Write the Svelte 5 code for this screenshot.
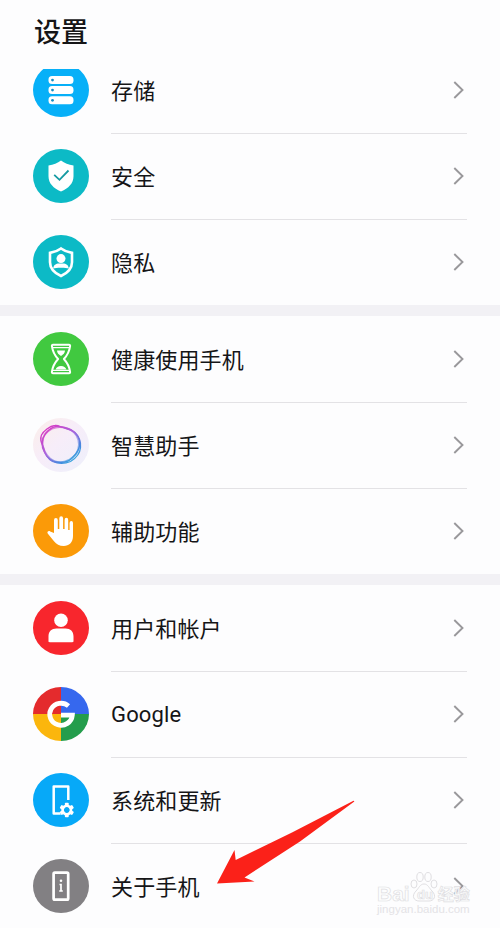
<script lang="ts">
  type Item = { icon: string; label: string; color: string };

  const groups: Item[][] = [
    [
      { icon: "storage", label: "存储", color: "#07b0f8" },
      { icon: "security", label: "安全", color: "#0cbac6" },
      { icon: "privacy", label: "隐私", color: "#0cbac6" },
    ],
    [
      { icon: "balance", label: "健康使用手机", color: "#41c940" },
      { icon: "assistant", label: "智慧助手", color: "url(#halo)" },
      { icon: "accessibility", label: "辅助功能", color: "#fb9a08" },
    ],
    [
      { icon: "account", label: "用户和帐户", color: "#f8262d" },
      { icon: "google", label: "Google", color: "#ffffff" },
      { icon: "system", label: "系统和更新", color: "#07a9f8" },
      { icon: "about", label: "关于手机", color: "#828083" },
    ],
  ];
  const teeth = [0, 60, 120, 180, 240, 300];
</script>

{#snippet glyph(name: string)}
  {#if name === "storage"}
    {#each [14.3, 24.3, 34.5] as y}
      <rect x="15.5" y={y - 1.2} width="25" height="8" rx="3.6" fill="#fff" />
      <circle cx="19.5" cy={y + 2.8} r="1.4" fill="#168fc4" />
    {/each}
  {:else if name === "security"}
    <path d="M28 11.5c3.5 2.7 7.5 4.3 12.5 5v10.8c0 7.2-5 12-12.5 15.2-7.5-3.2-12.5-8-12.5-15.2V16.5c5-.7 9-2.3 12.5-5z" fill="#fff" />
    <path d="M21.2 25.8l5.3 5 9-9.3" fill="none" stroke="#159aa2" stroke-width="1.8" />
  {:else if name === "privacy"}
    <path d="M28 13.500c3.300 2.500 6.500 3.600 11 4.400v9.300c0 6.500-4.500 10.800-11 13.800-6.500-3-11-7.300-11-13.800v-9.300c4.500-.8 7.700-1.900 11-4.400z" fill="none" stroke="#fff" stroke-width="2.6" />
    <circle cx="28" cy="23.6" r="4.500" fill="#fff" />
    <path d="M20.200 33.500c.4-3.600 2.700-5 5.800-5h4c3.100 0 5.400 1.400 5.800 5-2-.7-3.800-.8-7.800-.8s-5.800.1-7.800.8z" fill="#fff" />
  {:else if name === "balance"}
    <g fill="none" stroke="#fff" stroke-width="2" stroke-linejoin="round">
      <path d="M20 12.800h16q1.300 0 1.100 1.300c-.8 6-3 9.400-6.200 12.900 3.200 3.500 5.400 6.900 6.200 12.900q.2 1.300-1.100 1.300H20q-1.300 0-1.100-1.300c.8-6 3-9.400 6.200-12.900-3.200-3.500-5.400-6.900-6.200-12.900q-.2-1.300 1.100-1.300z" />
      <path d="M19.500 15.600h17M19.500 38.400h17" stroke-width="1.200" />
    </g>
    <path d="M24 18.500h8c-.2 2.500-1.600 4-4 5.500-2.400-1.500-3.800-3-4-5.500zM22.600 37.500c.8-2 2.600-3.400 5.400-3.400s4.600 1.400 5.400 3.400z" fill="#fff" />
  {:else if name === "assistant"}
    <g fill="none" stroke="url(#ring)">
      <path d="M16 12c4-3 6-4 9-3.500 5 .5 12 2 17 6 5 5 6 10 5.500 15-.5 6-5 11-10 14-6 2.500-13 2-18 0-5-3-8-8-10-14-1-6 1-13 6.500-17.500z" stroke-width="1.300" />
      <path d="M22 7.500c4-.5 6 2 11 3 7 1.500 12 6 13.500 12 1.500 7-3 14-8 18-4 4-11 4.500-17 3-7-2-10-9-11-14C8.500 25 6.500 22 8.500 17c2-4 8-9 13.500-9.500z" stroke-width="1.300" />
      <path d="M19 10.500c6-2.500 13-1.500 18 1 6 3.500 9 9 9 15 0 7-4 12-10 15.500-7 3.500-14 2.500-19-1.500-5-5-7-9-7.500-14.500C9 19 13 13.500 19 10.500z" stroke-width="2" opacity=".6" />
    </g>
  {:else if name === "accessibility"}
    <path d="M21 29V16.200q0-2.200 1.900-2.200t1.900 2.200V25h1.500V14.500q0-2.200 1.900-2.200t1.900 2.200V25h1.500V16q0-2.200 1.800-2.200t1.800 2.200v10h1.400V19q0-2 1.700-2t1.700 2v13c0 6.500-4 10-9.200 10-4.600 0-7.300-1.600-9.800-4.800l-6.300-7.700c-1-1.400.8-3.200 2.500-2z" fill="#fff" />
  {:else if name === "account"}
    <circle cx="28" cy="19.200" r="6.800" fill="#fff" />
    <path d="M15.500 40v-4.500c0-5.200 3-8 8-8h9c5 0 8 2.800 8 8V40c0 .8-.4 1.200-1.200 1.200H16.700c-.8 0-1.200-.4-1.200-1.200z" fill="#fff" />
  {:else if name === "google"}
    <g clip-path="url(#disc)">
      <path d="M0 0h28v27H0z" fill="#e42b2d" />
      <path d="M28 0h28v27H28z" fill="#3668ee" />
      <path d="M0 27h28v27H0z" fill="#fbb60d" />
      <path d="M28 27h28v27H28z" fill="#249d4c" />
    </g>
    <path d="M35.500 19A11.300 11 0 1 0 39.300 28.200H28" fill="none" stroke="#fff" stroke-width="4.800" />
  {:else if name === "system"}
    <path d="M35.3 27V13.600H20.700v27h7" fill="none" stroke="#fff" stroke-width="2.500" stroke-linejoin="round" />
    <g transform="translate(33.8 37)">
      <circle r="7" fill="#07a9f8" />
      {#each teeth as angle}
        <rect x="-1.9" y="-7.200" width="3.800" height="4" rx=".8" fill="#fff" transform="rotate({angle})" />
      {/each}
      <circle r="4.200" fill="none" stroke="#fff" stroke-width="2.600" />
    </g>
  {:else if name === "about"}
    <rect x="20.600" y="13.700" width="14.600" height="27" rx="1.200" fill="none" stroke="#fff" stroke-width="2.700" />
    <circle cx="28" cy="21.800" r="1.300" fill="#fff" />
    <path d="M26.500 25.500H28V32M26.200 32h3.600" fill="none" stroke="#fff" stroke-width="1.700" />
  {/if}
{/snippet}

<svg class="defs" width="0" height="0" aria-hidden="true">
  <defs>
    <clipPath id="disc"><ellipse cx="28" cy="27" rx="28" ry="27" /></clipPath>
    <linearGradient id="ring" gradientUnits="userSpaceOnUse" x1="14" y1="10" x2="42" y2="44">
      <stop offset="0" stop-color="#d63bc4" />
      <stop offset=".45" stop-color="#a765dd" />
      <stop offset=".8" stop-color="#4289df" />
      <stop offset="1" stop-color="#38b2dc" />
    </linearGradient>
    <linearGradient id="halo" x1="0" y1="0" x2="1" y2="1">
      <stop offset="0" stop-color="#fbeee9" />
      <stop offset=".45" stop-color="#f7edf9" />
      <stop offset="1" stop-color="#edf0fb" />
    </linearGradient>
  </defs>
</svg>

<main class="settings">
  <header><h1>设置</h1></header>

  <div class="list">
    {#each groups as group}
      <section class="group">
        {#each group as item}
          <div class="row">
            <svg class="icon" width="56" height="54" viewBox="0 0 56 54">
              <ellipse cx="28" cy="27" rx="28" ry="27" fill={item.color} />
              {@render glyph(item.icon)}
            </svg>
            <div class="body">
              <span class="label" class:latin={item.label === "Google"}>{item.label}</span>
              <svg class="chevron" width="12" height="20" viewBox="0 0 12 20">
                <path d="M1.300 2l8.200 8-8.200 8" />
              </svg>
            </div>
          </div>
        {/each}
      </section>
    {/each}
  </div>

  <svg class="arrow" width="140" height="86" viewBox="0 0 140 86">
    <path d="M1 83.500L18.500 50l1.200 10L76 32.500 137 1q2-.5 1 .7L84 41.500 28.500 77.500l10 4z" />
  </svg>

  <div class="watermark">
    <div class="brand">
      <span>Bai</span>
      <svg width="28" height="32" viewBox="0 0 28 32">
        <ellipse cx="4" cy="13" rx="3" ry="4" />
        <ellipse cx="10" cy="6" rx="3.200" ry="4.500" />
        <ellipse cx="18" cy="6" rx="3.200" ry="4.500" />
        <ellipse cx="24" cy="13" rx="3" ry="4" />
        <path d="M14 13c4 0 5 4 8 7 5 5 2 10-3 10H9c-5 0-8-5-3-10 3-3 4-7 8-7z" />
        <text x="7" y="27.500">du</text>
      </svg>
      <span class="cn">经验</span>
    </div>
    <div class="url">jingyan.baidu.com</div>
  </div>
</main>

<style>
  :global(body) {
    background: #fdfdfe;
  }

  .defs {
    position: absolute;
  }

  .settings {
    position: relative;
    width: 500px;
    height: 928px;
    overflow: hidden;
    background: #fdfdfe;
    color: #151517;
    font-family: "Noto Sans CJK SC", sans-serif;
  }

  header {
    height: 69px;
    padding-left: 34px;
  }

  h1 {
    margin: 0;
    padding-top: 11px;
    font-size: 27px;
    line-height: 40px;
    font-weight: 500;
  }

  .list {
    overflow: hidden;
  }

  .group {
    padding-top: 1px;
  }

  /* the first row is scrolled partly under the header */
  .group:first-child {
    margin-top: -21px;
    padding-top: 0;
  }

  .group + .group {
    border-top: 11px solid #f2f1f5;
  }

  .row {
    display: flex;
    height: 86px;
    padding: 0 33px;
    box-sizing: border-box;
  }

  .row:last-child {
    height: 85px;
  }

  .icon {
    flex-shrink: 0;
    margin-top: 15px;
  }

  .body {
    display: flex;
    flex: 1;
    align-items: center;
    justify-content: space-between;
    margin-left: 22px;
    border-bottom: 1px solid #e3e2e5;
  }

  .row:last-child .body {
    border-bottom: none;
  }

  .label {
    padding-bottom: 4px;
    font-size: 22px;
    line-height: 32px;
    letter-spacing: 0.15px;
  }

  .latin {
    padding-bottom: 0;
    font-family: Roboto, sans-serif;
  }

  .chevron {
    margin: 0 2px 1px 0;
    fill: none;
    stroke: #99989b;
    stroke-width: 1.9;
  }

  .arrow {
    position: absolute;
    left: 216px;
    top: 800px;
    fill: #fb2119;
  }

  .watermark {
    position: absolute;
    left: 377px;
    top: 871px;
    width: 96px;
    font-family: "Liberation Sans", sans-serif;
    color: #fdfdfe;
    -webkit-text-stroke: 0.7px #e0dfe2;
  }

  .brand {
    display: flex;
    height: 31px;
    font-size: 21px;
    line-height: 45px;
    font-weight: 700;
  }

  .brand svg {
    flex-shrink: 0;
    fill: #fdfdfe;
    stroke: #e0dfe2;
    stroke-width: 1;
  }

  .brand text {
    font-size: 13px;
    stroke-width: 0.7px;
  }

  .cn {
    font-family: "Noto Sans CJK SC", sans-serif;
    font-size: 16px;
    line-height: 44px;
  }

  .url {
    font-size: 11.5px;
    line-height: 14px;
    -webkit-text-stroke: 0;
    color: #e4e3e6;
  }
</style>
